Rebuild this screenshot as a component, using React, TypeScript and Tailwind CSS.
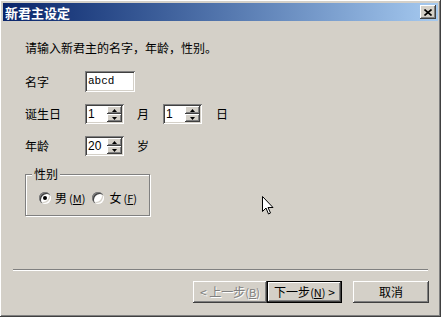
import React from 'react';

const raised =
  'shadow-[inset_-1px_-1px_#404040,inset_1px_1px_#ffffff,inset_-2px_-2px_#808080,inset_2px_2px_#d4d0c8]';
const sunken =
  'shadow-[inset_1px_1px_#808080,inset_-1px_-1px_#ffffff,inset_2px_2px_#404040,inset_-2px_-2px_#d4d0c8]';

const font = { fontFamily: '"Noto Sans CJK SC", "Noto Sans", sans-serif' };

function Hotkey({ k }: { k: string }) {
  return (
    <span className="text-[11px]">
      (<span className="underline underline-offset-1">{k}</span>)
    </span>
  );
}

function SpinBox({ value }: { value: string }) {
  return (
    <div className={`relative flex h-[20px] w-[39px] bg-white ${sunken}`}>
      <span className="pl-[3px] pt-[2px] font-['Liberation_Sans',sans-serif] text-[12px] leading-[16px] text-black">
        {value}
      </span>
      <div className="absolute right-[2px] top-[2px] flex w-[15px] flex-col">
        <div className={`flex h-[8px] items-center justify-center bg-[#d4d0c8] ${raised}`}>
          <svg width="5" height="3" viewBox="0 0 5 3">
            <path d="M2.5 0 L5 3 L0 3 Z" fill="#000" />
          </svg>
        </div>
        <div className={`flex h-[8px] items-center justify-center bg-[#d4d0c8] ${raised}`}>
          <svg width="5" height="3" viewBox="0 0 5 3">
            <path d="M0 0 L5 0 L2.5 3 Z" fill="#000" />
          </svg>
        </div>
      </div>
    </div>
  );
}

function Radio({ checked }: { checked?: boolean }) {
  return (
    <div className="relative h-[12px] w-[12px] rounded-full bg-white shadow-[inset_1px_1px_#808080,inset_2px_2px_#404040,inset_-1px_-1px_#ffffff,inset_-2px_-2px_#d4d0c8]">
      {checked && (
        <div className="absolute left-[4px] top-[4px] h-[4px] w-[4px] rounded-full bg-black" />
      )}
    </div>
  );
}

export default function App() {
  return (
    <div
      style={font}
      className={`relative flex h-[317px] w-[441px] flex-col bg-[#d4d0c8] p-[3px] text-[12px] text-black ${raised}`}
    >
      {/* title bar */}
      <div className="flex h-[18px] items-center justify-between bg-gradient-to-r from-[#0a246a] to-[#a6caf0] pl-[2px] pr-[2px]">
        <span className="text-[13px] font-bold leading-none text-white">新君主设定</span>
        <button className={`flex h-[14px] w-[16px] items-center justify-center bg-[#d4d0c8] ${raised}`}>
          <svg width="8" height="7" viewBox="0 0 8 7">
            <path d="M0.5 0.5 L7.5 6.5 M7.5 0.5 L0.5 6.5" stroke="#000" strokeWidth="1.6" />
          </svg>
        </button>
      </div>

      <div className="flex flex-col pl-[22px]">
        <div className="mt-[19px] h-4 leading-4">请输入新君主的名字，年龄，性别。</div>

        <div className="mt-[15px] flex h-[21px] items-center">
          <span className="w-[60px]">名字</span>
          <div className={`flex h-[21px] w-[50px] items-center bg-white pl-[3px] ${sunken}`}>
            <span className="font-['Liberation_Mono',monospace] text-[11px]">abcd</span>
          </div>
        </div>

        <div className="mt-[12px] flex h-[20px] items-center">
          <span className="w-[60px]">诞生日</span>
          <SpinBox value="1" />
          <span className="ml-[13px] w-[26px]">月</span>
          <SpinBox value="1" />
          <span className="ml-[14px]">日</span>
        </div>

        <div className="mt-[12px] flex h-[20px] items-center">
          <span className="w-[60px]">年龄</span>
          <SpinBox value="20" />
          <span className="ml-[13px]">岁</span>
        </div>

        <div className="relative mt-[18px] h-[42px] w-[125px] border border-[#808080] shadow-[1px_1px_0_#ffffff,inset_1px_1px_0_#ffffff]">
          <span className="absolute -top-[9px] left-[6px] bg-[#d4d0c8] px-[2px] leading-4">性别</span>
          <div className="mt-[14px] flex items-center pl-[13px]">
            <Radio checked />
            <span className="ml-[4px]">男</span>
            <span className="ml-[2px]">
              <Hotkey k="M" />
            </span>
            <span className="ml-[7px]" />
            <Radio />
            <span className="ml-[5px]">女</span>
            <span className="ml-[2px]">
              <Hotkey k="F" />
            </span>
          </div>
        </div>
      </div>

      <div className="flex-1" />

      <div className="mx-[10px] h-[2px] border-t border-[#808080] border-b border-b-white" />

      <div className="mb-[11px] mt-[10px] flex justify-end pr-[9px]">
        <button
          className={`flex h-[22px] w-[74px] items-center justify-center bg-[#d4d0c8] text-[#808080] [text-shadow:1px_1px_0_#ffffff] ${raised}`}
        >
          <span className="whitespace-pre">
            {'< '}上一步<Hotkey k="B" />
          </span>
        </button>
        <button className="h-[22px] w-[75px] bg-black p-[1px]">
          <div className={`flex h-full w-full items-center justify-center bg-[#d4d0c8] ${raised}`}>
            <span className="whitespace-pre">
              下一步<Hotkey k="N" />
              {' >'}
            </span>
          </div>
        </button>
        <button
          className={`ml-[11px] flex h-[22px] w-[76px] items-center justify-center bg-[#d4d0c8] ${raised}`}
        >
          取消
        </button>
      </div>

      {/* mouse pointer */}
      <svg className="absolute left-[262px] top-[196px]" width="13" height="20" viewBox="0 0 13 20">
        <path
          d="M0.5 0.5 L0.5 15.5 L4 12 L6.5 18 L8.5 17 L6 11.5 L11 11.5 Z"
          fill="#fff"
          stroke="#000"
          strokeWidth="1"
          strokeLinejoin="miter"
        />
      </svg>
    </div>
  );
}
